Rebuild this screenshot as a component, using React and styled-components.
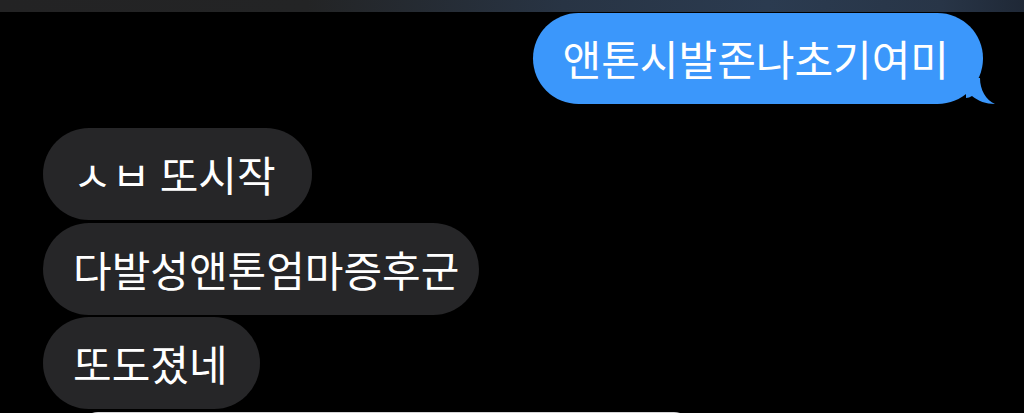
import React from 'react'
import styled, { createGlobalStyle } from 'styled-components'

const GlobalStyle = createGlobalStyle`
  html, body {
    margin: 0;
    padding: 0;
    background: #000;
    overflow: hidden;
  }
  body {
    font-family: "Noto Sans CJK KR", "Noto Sans", sans-serif;
  }
`

const Screen = styled.div`
  width: 1024px;
  height: 413px;
  display: flex;
  flex-direction: column;
  background: #000;
  overflow: hidden;
`

const TopBar = styled.div`
  height: 12px;
  flex-shrink: 0;
  background: linear-gradient(90deg, #232324 0%, #232425 30%, #283444 55%, #2b3b50 75%, #283547 92%, #1f2836 100%);
`

const Thread = styled.div`
  display: flex;
  flex-direction: column;
  padding: 1px 41px 0 43px;
`

const Row = styled.div`
  display: flex;
  flex-shrink: 0;
  justify-content: ${p => (p.$mine ? 'flex-end' : 'flex-start')};
  margin-top: ${p => p.$gap || 0}px;
`

const Bubble = styled.div`
  position: relative;
  height: ${p => p.$h || 92}px;
  display: flex;
  align-items: center;
  padding: 0 ${p => p.$right || 30}px 2px 30px;
  border-radius: 46px;
  background: ${p => (p.$mine ? '#3b97fb' : '#262628')};
  color: #fff;
  font-size: 42px;
  font-weight: 400;
  white-space: pre;
  box-sizing: border-box;
`

const Tail = styled.svg`
  position: absolute;
  right: -13px;
  bottom: 0;
  width: 30px;
  height: 26px;
`

const Attachment = styled.div`
  width: 612px;
  height: 80px;
  margin-left: 37px;
  border-radius: 18px;
  background: #d4d4d6;
`

function BlueTail() {
  return (
    <Tail viewBox="0 0 30 26">
      <path d="M0 0 L14 0 C14 12 20 22 29 26 C20 26 12 23 6 18 C4 19 2 20 0 20 Z" fill="#3b97fb" />
    </Tail>
  )
}

const incoming = [
  { text: 'ㅅㅂ 또시작', gap: 24, right: 36 },
  { text: '다발성앤톤엄마증후군', gap: 3, right: 20 },
  { text: '또도졌네', gap: 2, right: 32 },
]

export default function App() {
  return (
    <Screen>
      <GlobalStyle />
      <TopBar />
      <Thread>
        <Row $mine>
          <Bubble $mine $h={91} $right={34}>
            앤톤시발존나초기여미
            <BlueTail />
          </Bubble>
        </Row>
        {incoming.map(m => (
          <Row key={m.text} $gap={m.gap}>
            <Bubble $right={m.right}>{m.text}</Bubble>
          </Row>
        ))}
        <Row $gap={3}>
          <Attachment />
        </Row>
      </Thread>
    </Screen>
  )
}
